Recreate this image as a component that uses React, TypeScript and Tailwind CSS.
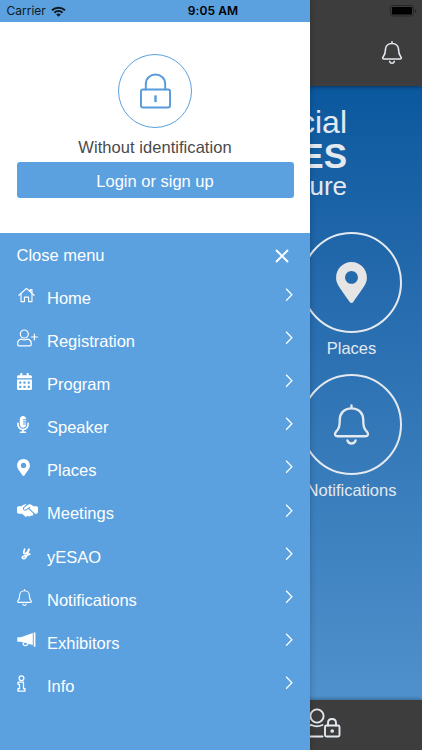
import type { ReactNode } from "react";
import { FaCalendarAlt, FaMapMarkerAlt, FaMicrophoneAlt } from "react-icons/fa";
import { FaHandshakeSimple } from "react-icons/fa6";

const line = {
  fill: "none",
  stroke: "currentColor",
  strokeLinecap: "round" as const,
  strokeLinejoin: "round" as const,
};

function Bell({ className, weight }: { className: string; weight: number }) {
  return (
    <svg viewBox="0 0 36 42" className={className} {...line} strokeWidth={weight}>
      <path d="M18 1.500v3M18 4.500C10.500 4.500 6 9.500 6 16c0 7-.8 9-4 12.700C.2 30.800 1 33 3.500 33h29c2.500 0 3.300-2.200 1.500-4.300C30.800 25 30 23 30 16 30 9.500 25.500 4.500 18 4.500zM13.800 37.300c.6 2 2.200 3.200 4.200 3.200s3.600-1.200 4.200-3.200" />
    </svg>
  );
}

function Home() {
  return (
    <svg viewBox="0 0 18 16" className="ml-px h-4 w-[17px]" {...line} strokeWidth={1.2}>
      <path d="M1 8.300 9 1l8 7.300M3.200 6.800V15h3.600v-4.700h4.400V15h3.600V6.800M13 4.600V2.300h1.800v4" />
    </svg>
  );
}

function Registration() {
  return (
    <svg viewBox="0 0 21 18" className="h-[18px] w-[21px]" {...line} strokeWidth={1.2}>
      <circle cx="7.300" cy="5" r="4" />
      <path d="M4.500 10.200c1.800.8 3.800.8 5.600 0 2.700.2 4.200 2 4.200 4.700 0 1.200-.6 2-1.700 2H2.200C1.100 16.900.6 16.100.6 14.900c0-2.700 1.400-4.500 3.900-4.700zM17.400 5v6M14.400 8h6" />
    </svg>
  );
}

function Megaphone() {
  return (
    <svg viewBox="0 0 19 16" className="h-4 w-[19px]" fill="currentColor">
      <path d="M.3 5.200h3.500L15.800 1v12L3.800 9.800H.3zM16.700.4h1.700v14.400h-1.700z" />
      <path d="M6.200 10.500c-.3 1.900.7 3.200 2.200 3.200s2.300-1 2.500-2.200" fill="none" stroke="currentColor" strokeWidth="1.300" />
    </svg>
  );
}

function Info() {
  return (
    <svg viewBox="0 0 9 17" className="h-[17px] w-[9px]" {...line} strokeWidth={1.25}>
      <circle cx="4.500" cy="3.200" r="2.400" />
      <path d="M1 7h5.500v6.700H8v2.500H1v-2.500h1.500V9.300H1z" />
    </svg>
  );
}

const entries: { label: string; icon: ReactNode }[] = [
  { label: "Home", icon: <Home /> },
  { label: "Registration", icon: <Registration /> },
  { label: "Program", icon: <FaCalendarAlt className="h-[17px] w-[15px]" /> },
  { label: "Speaker", icon: <FaMicrophoneAlt className="h-[17px] w-3" /> },
  { label: "Places", icon: <FaMapMarkerAlt className="h-[17px] w-[13px]" /> },
  { label: "Meetings", icon: <FaHandshakeSimple className="h-[17px] w-[21px]" /> },
  {
    label: "yESAO",
    icon: (
      <svg viewBox="0 0 10 12" className="ml-1 h-3 w-2.5" {...line} strokeWidth={1.7}>
        <path d="M3.700 1.200C2.700 3.500 2.200 5.600 3.700 5.600 5.500 5.600 7 3.500 8 1.200 7 4.500 6 10.700 3 10.700.7 10.700.6 8.600 3 8l5.800-1.900" />
      </svg>
    ),
  },
  { label: "Notifications", icon: <Bell className="h-[17px] w-[15px]" weight={2.7} /> },
  { label: "Exhibitors", icon: <Megaphone /> },
  { label: "Info", icon: <Info /> },
];

function StatusBar() {
  return (
    <div className="absolute inset-x-0 top-0 z-20 flex h-[22px] items-center text-[#101820]">
      <div className="flex w-[142px] items-center gap-[5px] pl-[6.500px] font-[Inter] text-[12px] tracking-[0]">
        <span>Carrier</span>
        <svg viewBox="0 0 15 11" className="h-[11px] w-[15px]" fill="none" stroke="currentColor" strokeWidth="2">
          <path d="M1 4.200c3.700-3.400 9.300-3.400 13 0M3.400 6.700c2.300-2.200 5.900-2.200 8.200 0" />
          <path d="M5.200 8.400c1.300-1.200 3.300-1.200 4.600 0L7.500 10.800z" fill="currentColor" stroke="none" />
        </svg>
      </div>
      <div className="flex-1 text-center font-[Inter] text-[12px] font-semibold tracking-[0.1px] whitespace-nowrap text-black">9:05 AM</div>
      <div className="flex w-[138px] justify-end pr-[5px]">
        <svg viewBox="0 0 27 12" className="h-3 w-[27px]">
          <rect x=".5" y=".5" width="23" height="10.500" rx="2.500" fill="none" stroke="#262626" />
          <rect x="2" y="2" width="20" height="7.500" rx="1" fill="#000" />
          <path d="M25 4v4q1.500-.5 1.500-2T25 4z" fill="#262626" />
        </svg>
      </div>
    </div>
  );
}

function Tile({ label, children }: { label: string; children: ReactNode }) {
  return (
    <div className="flex h-[142.300px] w-[141px] flex-col items-center">
      <div className="flex size-[101px] shrink-0 items-center justify-center rounded-full border-2 border-[#e4e9ef]">{children}</div>
      <span className="mt-[5px] text-[16.500px] leading-5">{label}</span>
    </div>
  );
}

function HomeScreen() {
  return (
    <main className="flex h-full flex-col text-[#e4e9ef]">
      <header className="z-[1] flex h-[86px] shrink-0 items-end justify-end bg-[#3d3d3d] pr-5 pb-[22px] shadow-[0_1px_4px_rgba(0,0,0,0.4)]">
        <Bell className="h-[23px] w-5" weight={2.900} />
      </header>
      <section className="flex flex-1 flex-col items-end bg-linear-to-b from-[#0a589e] to-[#4e91cc]">
        <h1 className="flex h-[145.500px] flex-col items-end pt-5 pr-[75px]">
          <span className="text-[32px] leading-[33px]">cial</span>
          <span className="text-[35px] leading-[34px] font-bold">ES</span>
          <span className="text-[26px] leading-[26px]">ure</span>
        </h1>
        <Tile label="Places">
          <FaMapMarkerAlt className="h-[41px] w-[31px] text-[#e5e5e5]" />
        </Tile>
        <Tile label="Notifications">
          <Bell className="h-[41px] w-[37px]" weight={2.400} />
        </Tile>
      </section>
      <footer className="z-[1] flex h-[50.500px] shrink-0 justify-end bg-[#3d3d3d] pt-[8px] pr-[81px] shadow-[0_-1px_4px_rgba(0,0,0,0.3)]">
        <svg viewBox="0 0 40 30" className="h-[30px] w-10" {...line} strokeWidth={1.9}>
          <circle cx="16" cy="8" r="6.600" />
          <path d="M21.500 17c-3.500 1.600-8 1.600-11 0C5 17.500 1 21 1 26c0 1.800.8 2.500 2.500 2.500h18M27 17.500V15c0-5.300 8-5.300 8 0v2.500" />
          <rect x="24" y="17.500" width="14.500" height="11" rx="1.500" />
          <circle cx="31.200" cy="23" r=".9" fill="currentColor" />
        </svg>
      </footer>
    </main>
  );
}

function Drawer() {
  return (
    <aside className="absolute inset-y-0 left-0 z-10 flex w-[310px] flex-col bg-[#5ba1e0] pt-[22px] shadow-[0_0_6px_rgba(0,0,0,0.25)]">
      <section className="flex h-[210.500px] shrink-0 flex-col items-center bg-white px-[16.500px] pt-8">
        <div className="flex size-[74px] shrink-0 items-center justify-center rounded-full border border-[#5ba1e0] text-[#579bdb]">
          <svg viewBox="0 0 32 37" className="h-[36px] w-[31px]" {...line} strokeWidth={2}>
            <path d="M6 17V11.500C6-1.800 26-1.800 26 11.500V17" />
            <rect x="1" y="17" width="30" height="18.500" rx="2" />
            <path d="M16 23v7" strokeWidth="2.500" strokeLinecap="butt" />
          </svg>
        </div>
        <p className="mt-[8px] text-[16.500px] leading-[22px] tracking-[0.050px] text-[#4a4a4a]">Without identification</p>
        <button className="mt-[4px] h-9 w-full rounded-[3px] bg-[#5ba1e0] pt-[2px] text-[16.500px] leading-5 text-white">Login or sign up</button>
      </section>
      <div className="flex h-[43px] items-center justify-between pt-px pr-[21px] pl-[16.500px] text-[16.500px] text-white">
        <span className="pt-px">Close menu</span>
        <svg viewBox="0 0 14 14" className="mt-[3px] size-[14px]" fill="none" stroke="currentColor" strokeWidth="1.900">
          <path d="m1 1 12 12M13 1 1 13" />
        </svg>
      </div>
      <nav>
        {entries.map(({ label, icon }) => (
          <a key={label} className="flex h-[43.150px] items-center pr-[17px] pl-[16.500px] text-[16.500px] text-white">
            <span className="flex w-[30.500px] shrink-0 pb-1">{icon}</span>
            <span className="flex-1 pt-[2px]">{label}</span>
            <svg viewBox="0 0 8 14" className="mb-[5px] h-[13.500px] w-2" fill="none" stroke="currentColor" strokeWidth="1.300">
              <path d="m1 .8 6 6.200-6 6.200" />
            </svg>
          </a>
        ))}
      </nav>
    </aside>
  );
}

export default function App() {
  return (
    <div className="relative h-[750px] w-[422px] overflow-hidden font-['Liberation_Sans',Arial,sans-serif]">
      <HomeScreen />
      <Drawer />
      <StatusBar />
    </div>
  );
}
